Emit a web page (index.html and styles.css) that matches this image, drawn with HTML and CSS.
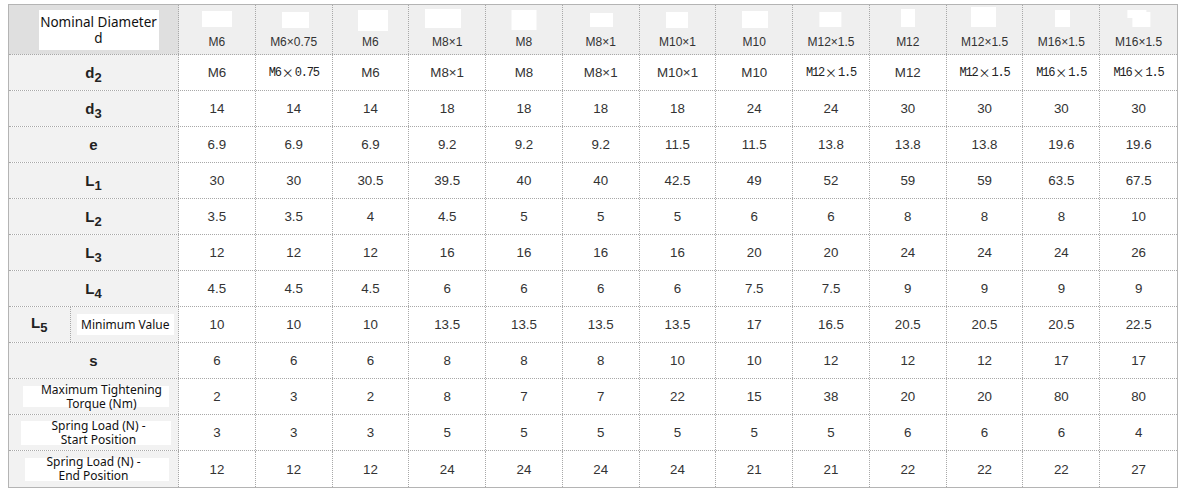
FILE: index.html
```html
<!DOCTYPE html>
<html>
<head>
<meta charset="utf-8">
<link rel="stylesheet" href="styles.css">
</head>
<body>
<div class="spec">
  <div class="row head">
    <div class="lbl nom"><span class="nombox">Nominal Diameter<br>d</span></div>
    <div class="hc"><svg class="pic" width="76" height="30"><rect x="23" y="6" width="30" height="16"/></svg><span>M6</span></div>
    <div class="hc"><svg class="pic" width="76" height="30"><rect x="26" y="7" width="27" height="16"/></svg><span>M6×0.75</span></div>
    <div class="hc"><svg class="pic" width="76" height="30"><rect x="26" y="5" width="30" height="21"/></svg><span>M6</span></div>
    <div class="hc"><svg class="pic" width="76" height="30"><rect x="16" y="4" width="36" height="19"/></svg><span>M8×1</span></div>
    <div class="hc"><svg class="pic" width="76" height="30"><rect x="25.5" y="5" width="25" height="20"/></svg><span>M8</span></div>
    <div class="hc"><svg class="pic" width="76" height="30"><rect x="27" y="8" width="23" height="14"/></svg><span>M8×1</span></div>
    <div class="hc"><svg class="pic" width="76" height="30"><rect x="26" y="7" width="22" height="16"/></svg><span>M10×1</span></div>
    <div class="hc"><svg class="pic" width="76" height="30"><rect x="26" y="6" width="26" height="17"/></svg><span>M10</span></div>
    <div class="hc"><svg class="pic" width="76" height="30"><rect x="26.4" y="7" width="22" height="15"/></svg><span>M12×1.5</span></div>
    <div class="hc"><svg class="pic" width="76" height="30"><rect x="31" y="4" width="14" height="18"/></svg><span>M12</span></div>
    <div class="hc"><svg class="pic" width="76" height="30"><rect x="24" y="2" width="25" height="20"/></svg><span>M12×1.5</span></div>
    <div class="hc"><svg class="pic" width="76" height="30"><rect x="32" y="5" width="15" height="17"/></svg><span>M16×1.5</span></div>
    <div class="hc"><svg class="pic" width="76" height="30"><rect x="26.4" y="5" width="19" height="8"/><rect x="31.4" y="7" width="18" height="15"/></svg><span>M16×1.5</span></div>
  </div>

  <div class="row">
    <div class="lbl"><span class="sym">d<sub>2</sub></span></div>
    <div class="c">M6</div>
    <div class="c ss">M6<span class="fx">×</span>0.75</div>
    <div class="c">M6</div>
    <div class="c">M8×1</div>
    <div class="c">M8</div>
    <div class="c">M8×1</div>
    <div class="c">M10×1</div>
    <div class="c">M10</div>
    <div class="c ss">M12<span class="fx">×</span>1.5</div>
    <div class="c">M12</div>
    <div class="c ss">M12<span class="fx">×</span>1.5</div>
    <div class="c ss">M16<span class="fx">×</span>1.5</div>
    <div class="c ss">M16<span class="fx">×</span>1.5</div>
  </div>

  <div class="row">
    <div class="lbl"><span class="sym">d<sub>3</sub></span></div>
    <div class="c">14</div><div class="c">14</div><div class="c">14</div><div class="c">18</div><div class="c">18</div><div class="c">18</div><div class="c">18</div><div class="c">24</div><div class="c">24</div><div class="c">30</div><div class="c">30</div><div class="c">30</div><div class="c">30</div>
  </div>

  <div class="row">
    <div class="lbl"><span class="sym">e</span></div>
    <div class="c">6.9</div><div class="c">6.9</div><div class="c">6.9</div><div class="c">9.2</div><div class="c">9.2</div><div class="c">9.2</div><div class="c">11.5</div><div class="c">11.5</div><div class="c">13.8</div><div class="c">13.8</div><div class="c">13.8</div><div class="c">19.6</div><div class="c">19.6</div>
  </div>

  <div class="row">
    <div class="lbl"><span class="sym">L<sub>1</sub></span></div>
    <div class="c">30</div><div class="c">30</div><div class="c">30.5</div><div class="c">39.5</div><div class="c">40</div><div class="c">40</div><div class="c">42.5</div><div class="c">49</div><div class="c">52</div><div class="c">59</div><div class="c">59</div><div class="c">63.5</div><div class="c">67.5</div>
  </div>

  <div class="row">
    <div class="lbl"><span class="sym">L<sub>2</sub></span></div>
    <div class="c">3.5</div><div class="c">3.5</div><div class="c">4</div><div class="c">4.5</div><div class="c">5</div><div class="c">5</div><div class="c">5</div><div class="c">6</div><div class="c">6</div><div class="c">8</div><div class="c">8</div><div class="c">8</div><div class="c">10</div>
  </div>

  <div class="row">
    <div class="lbl"><span class="sym">L<sub>3</sub></span></div>
    <div class="c">12</div><div class="c">12</div><div class="c">12</div><div class="c">16</div><div class="c">16</div><div class="c">16</div><div class="c">16</div><div class="c">20</div><div class="c">20</div><div class="c">24</div><div class="c">24</div><div class="c">24</div><div class="c">26</div>
  </div>

  <div class="row">
    <div class="lbl"><span class="sym">L<sub>4</sub></span></div>
    <div class="c">4.5</div><div class="c">4.5</div><div class="c">4.5</div><div class="c">6</div><div class="c">6</div><div class="c">6</div><div class="c">6</div><div class="c">7.5</div><div class="c">7.5</div><div class="c">9</div><div class="c">9</div><div class="c">9</div><div class="c">9</div>
  </div>

  <div class="row">
    <div class="lbl split">
      <div class="part p1"><span class="sym">L<sub>5</sub></span></div>
      <div class="part p2"><span class="tbox">Minimum Value</span></div>
    </div>
    <div class="c">10</div><div class="c">10</div><div class="c">10</div><div class="c">13.5</div><div class="c">13.5</div><div class="c">13.5</div><div class="c">13.5</div><div class="c">17</div><div class="c">16.5</div><div class="c">20.5</div><div class="c">20.5</div><div class="c">20.5</div><div class="c">22.5</div>
  </div>

  <div class="row">
    <div class="lbl"><span class="sym">s</span></div>
    <div class="c">6</div><div class="c">6</div><div class="c">6</div><div class="c">8</div><div class="c">8</div><div class="c">8</div><div class="c">10</div><div class="c">10</div><div class="c">12</div><div class="c">12</div><div class="c">12</div><div class="c">17</div><div class="c">17</div>
  </div>

  <div class="row">
    <div class="lbl"><div class="wblock w1">Maximum Tightening<br>Torque (Nm)</div></div>
    <div class="c">2</div><div class="c">3</div><div class="c">2</div><div class="c">8</div><div class="c">7</div><div class="c">7</div><div class="c">22</div><div class="c">15</div><div class="c">38</div><div class="c">20</div><div class="c">20</div><div class="c">80</div><div class="c">80</div>
  </div>

  <div class="row">
    <div class="lbl"><div class="wblock w2">Spring Load (N) -<br>Start Position</div></div>
    <div class="c">3</div><div class="c">3</div><div class="c">3</div><div class="c">5</div><div class="c">5</div><div class="c">5</div><div class="c">5</div><div class="c">5</div><div class="c">5</div><div class="c">6</div><div class="c">6</div><div class="c">6</div><div class="c">4</div>
  </div>

  <div class="row">
    <div class="lbl"><div class="wblock w3">Spring Load (N) -<br>End Position</div></div>
    <div class="c">12</div><div class="c">12</div><div class="c">12</div><div class="c">24</div><div class="c">24</div><div class="c">24</div><div class="c">24</div><div class="c">21</div><div class="c">21</div><div class="c">22</div><div class="c">22</div><div class="c">22</div><div class="c">27</div>
  </div>
</div>
</body>
</html>
```

FILE: styles.css
```css
* { box-sizing: border-box; }
html, body { margin: 0; padding: 0; background: #fff; }
body { padding: 4px 0 0 8px; font-family: "Liberation Sans", Arial, sans-serif; color: #333; }

.spec {
  width: 1170px;
  border: 1px solid #b4b4b4;
}

.row {
  display: grid;
  grid-template-columns: 170px repeat(13, 1fr);
  height: 36px;
  border-bottom: 1px dotted #a8a8a8;
}
.row:last-child { border-bottom: none; }
.row.head { height: 50px; background: #efefef; }

.row > div {
  border-right: 1px dotted #a8a8a8;
  display: flex;
  align-items: center;
  justify-content: center;
  min-width: 0;
}
.row > div:last-child { border-right: none; }

.c { font-size: 13.33px; background: #fff; }

.hc {
  flex-direction: column;
  justify-content: flex-start !important;
  font-size: 12px;
}
.hc .pic { display: block; flex: none; }
.hc .pic rect { fill: #fff; }
.hc span { line-height: 14px; }

.lbl { background: #f2f2f2; color: #222; }
.lbl.nom { background: #dfdfdf; }
.nombox {
  background: #fff;
  width: 120px;
  height: 40px;
  padding-top: 4px;
  margin-left: 10px;
  text-align: center;
  font-family: "Noto Sans", sans-serif;
  font-size: 13.5px;
  line-height: 16px;
  color: #111;
}

.sym { font-weight: bold; font-size: 15px; line-height: 18px; }
.sym sub { font-size: 13px; vertical-align: -4px; line-height: 0; }

.lbl.split { justify-content: flex-start; align-items: stretch; }
.part { display: flex; align-items: center; justify-content: center; }
.part.p1 { width: 62px; border-right: 1px dotted #a8a8a8; padding-bottom: 3px; }
.part.p2 { width: 108px; }
.tbox {
  background: #fff;
  font-family: "Noto Sans", sans-serif;
  font-size: 12px;
  line-height: 21px;
  padding: 0 4px;
  color: #111;
  margin-left: 2px;
}

.wblock {
  background: #fff;
  height: 21px;
  display: flex;
  align-items: center;
  justify-content: center;
  text-align: center;
  font-family: "Noto Sans", sans-serif;
  font-size: 12px;
  line-height: 14px;
  color: #111;
  white-space: nowrap;
}
.w1 { width: 146px; margin-left: 4px; padding-left: 12px; }
.w2 { width: 150px; height: 24px; margin-left: 4px; padding-left: 6px; }
.w3 { width: 144px; height: 23px; margin-left: 6px; padding-right: 6px; }

.ss { font-family: "Liberation Mono", monospace; font-size: 12px; letter-spacing: -1.2px; color: #222; }
.ss .fx { font-family: "Noto Sans CJK SC", sans-serif; font-size: 12px; letter-spacing: 0; padding: 0 1px; }
```
